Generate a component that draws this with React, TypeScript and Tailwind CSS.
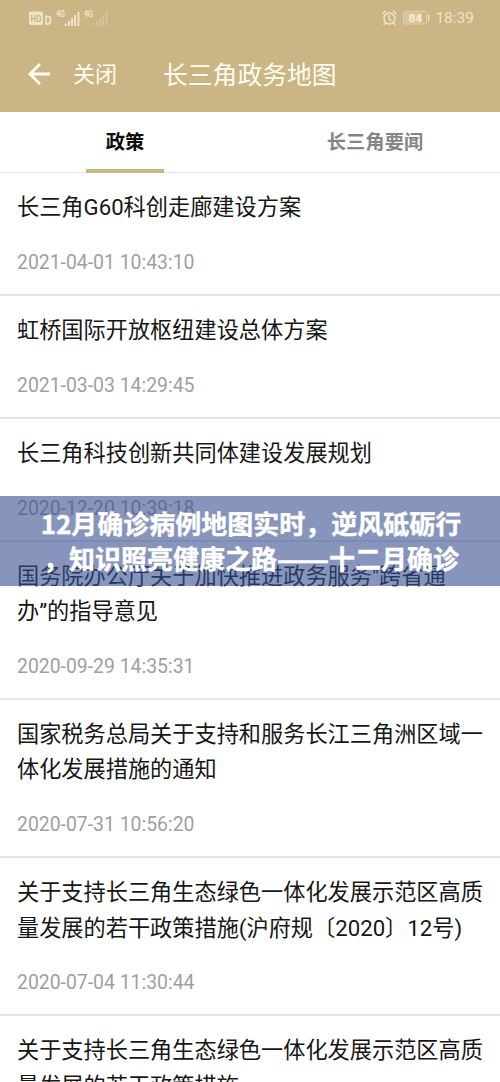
const policies = [
  { lines: ['长三角G60科创走廊建设方案'], date: '2021-04-01 10:43:10' },
  { lines: ['虹桥国际开放枢纽建设总体方案'], date: '2021-03-03 14:29:45' },
  { lines: ['长三角科技创新共同体建设发展规划'], date: '2020-12-20 10:39:18' },
  { lines: ['国务院办公厅关于加快推进政务服务"跨省通', '办”的指导意见'], date: '2020-09-29 14:35:31' },
  { lines: ['国家税务总局关于支持和服务长江三角洲区域一', '体化发展措施的通知'], date: '2020-07-31 10:56:20' },
  { lines: ['关于支持长三角生态绿色一体化发展示范区高质', '量发展的若干政策措施(沪府规〔2020〕12号)'], date: '2020-07-04 11:30:44' },
  { lines: ['关于支持长三角生态绿色一体化发展示范区高质', '量发展的若干政策措施'], date: '2020-07-04 11:30:44' },
];

function Signal({ faint = false }: { faint?: boolean }) {
  return (
    <svg width="25" height="18" viewBox="0 0 25 18" fill="#f5ecd6">
      <text x="0" y="8" fontSize="9" fontWeight="700" fontFamily="Roboto, sans-serif" textLength="9" lengthAdjust="spacingAndGlyphs">4G</text>
      <g opacity={faint ? 0.3 : 1}>
        <rect x="8.500" y="14.500" width="2" height="2.500" />
        <rect x="12" y="12" width="2" height="5" />
        <rect x="15" y="9" width="2" height="8" />
        <rect x="18" y="6" width="2" height="11" />
        <rect x="21.500" y="3" width="2" height="14" />
      </g>
    </svg>
  );
}

function StatusBar() {
  return (
    <div className="flex h-[35px] items-center justify-between pl-7 pr-[26px] text-[#f5ecd6]">
      <div className="flex items-center opacity-85">
        <svg width="28" height="18" viewBox="0 0 28 18" fill="none">
          <rect x="1" y="2.500" width="14" height="13.500" rx="2" fill="#f5ecd6" />
          <text x="2.500" y="13" fontSize="9.500" fontWeight="700" fill="#cbb584" fontFamily="Roboto, sans-serif" textLength="11" lengthAdjust="spacingAndGlyphs">HD</text>
          <path d="M18 7.500h2q2.500 0 2.500 3.750T20 15h-2z" stroke="#f5ecd6" strokeWidth="1.800" />
        </svg>
        <Signal />
        <span className="w-[3px]" />
        <Signal faint />
      </div>
      <div className="flex items-center opacity-85">
        <svg width="15" height="16" viewBox="0 0 15 16" fill="none" stroke="#f5ecd6" strokeWidth="1.500" strokeLinecap="round">
          <circle cx="7.500" cy="8.500" r="5.500" />
          <path d="M7 5.500V9l2 1.500M1 3.500 3.500 1M14 3.500 11.500 1M3.500 13 2 14.500M11.500 13l1.500 1.500" />
        </svg>
        <svg className="ml-[6px]" width="27" height="14" viewBox="0 0 27 14" fill="none">
          <rect x="0.500" y="0.500" width="23" height="12.500" rx="1" stroke="#f5ecd6" strokeOpacity=".65" />
          <rect x="1.500" y="1.500" width="18" height="10.500" fill="#f5ecd6" fillOpacity=".35" />
          <rect x="25" y="4" width="1.500" height="6" fill="#f5ecd6" />
          <text x="5.500" y="10.700" fontSize="11.500" fontWeight="700" fill="#fff9e9" fontFamily="Roboto, sans-serif" textLength="13.500" lengthAdjust="spacingAndGlyphs">84</text>
        </svg>
        <span className="ml-[5px] text-[15.500px] leading-4">18:39</span>
      </div>
    </div>
  );
}

export default function App() {
  return (
    <div lang="zh-CN" className="relative h-[1082px] w-[500px] overflow-hidden bg-white font-['Roboto','Noto_Sans_CJK_SC',sans-serif]">
      <header className="h-[112px] bg-[#cbb584]">
        <StatusBar />
        <div className="flex h-[77px] items-center pl-7 text-[#fffcf2]">
          <svg width="23" height="24" viewBox="0 0 23 24" fill="none" stroke="currentColor" strokeWidth="2.800">
            <path d="M22 12H2M12 2 2 12l10 10" />
          </svg>
          <span className="ml-[22px] pt-[3px] text-[22px] leading-8">关闭</span>
          <span className="ml-[46px] pt-[4px] text-[24.800px] leading-8">长三角政务地图</span>
        </div>
      </header>

      <nav className="flex h-[61px] border-b border-[#e3e3e3] text-[19.300px] font-bold leading-7">
        <div className="flex h-[61px] w-1/2 flex-col items-center justify-between pt-[17px]">
          <span className="text-[#0d0d0d]">政策</span>
          <span className="h-1 w-[78px] shrink-0 bg-[#c9b882]" />
        </div>
        <div className="flex w-1/2 justify-center pt-[17px] text-[#858585]">长三角要闻</div>
      </nav>

      <main>
        {policies.map((policy, index) => (
          <article key={index} className="border-b-2 border-[#e5e5e5] pb-[17.900px] pl-[17px] pt-[17.300px]">
            <h2 className="whitespace-nowrap text-[22.200px] leading-[35.300px] text-[#161616]">
              {policy.lines.map((line) => (
                <span key={line} className="block">{line}</span>
              ))}
            </h2>
            <time className="mt-[24.400px] block text-[19.400px] leading-[26px] text-[#9f9f9f]">{policy.date}</time>
          </article>
        ))}
      </main>

      <div className="absolute left-0 top-[496px] flex h-[90px] w-full flex-col items-center justify-center whitespace-nowrap bg-[#374e91]/60 pb-[2px] pl-[2px] font-['Noto_Sans_CJK_SC',sans-serif] text-[26px] font-bold leading-[35px] text-white [-webkit-text-stroke:0.400px_white]">
        <span>12月确诊病例地图实时，逆风砥砺行</span>
        <span className="flex">
          <span>，知识照亮健康之路</span>
          <span className="flex w-[52px] justify-center">
            <span className="scale-x-[1.180]">——</span>
          </span>
          <span>十二月确诊</span>
        </span>
      </div>
    </div>
  );
}
